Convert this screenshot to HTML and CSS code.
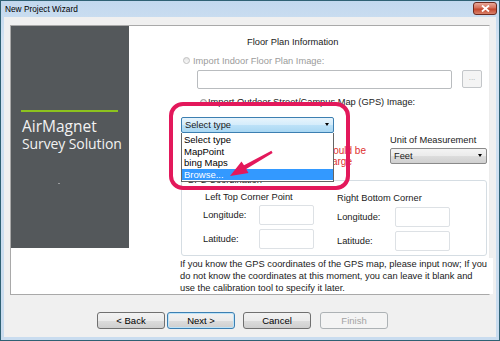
FILE: index.html
```html
<!DOCTYPE html>
<html lang="en">
<head>
    <meta charset="UTF-8">
    <title>New Project Wizard</title>
    <link rel="stylesheet" href="styles.css">
</head>
<body>

    <div class="window">
        <div class="titlebar">
            <span class="title">New Project Wizard</span>
            <span class="close">
                <svg width="9" height="7" viewBox="0 0 9 7"><path d="M1 0.5 L8 6.5 M8 0.5 L1 6.5" stroke="#fff" stroke-width="1.8"/></svg>
            </span>
        </div>

        <div class="client">
            <div class="panel">
                <div class="sidebar">
                    <div class="brand-line"></div>
                    <div class="brand">
                        <div class="brand-top">AirMagnet</div>
                        <div class="brand-bottom">Survey Solution</div>
                    </div>
                    <div class="brand-dot"></div>
                </div>

                <div class="content">
                    <div class="heading">Floor Plan Information</div>

                    <label class="radio indoor disabled"><span class="dot"></span>Import Indoor Floor Plan Image:</label>
                    <div class="file-row">
                        <div class="textbox"></div>
                        <div class="browse">...</div>
                    </div>

                    <label class="radio outdoor"><span class="dot"></span>Import Outdoor Street/Campus Map (GPS) Image:</label>
                    <div class="combo open">Select type<span class="caret"></span></div>

                    <div class="middle-row">
                        <div class="warning">
                            <div>The map type should be</div>
                            <div class="second">set for a large</div>
                        </div>
                        <div class="unit">
                            <div class="unit-label">Unit of Measurement</div>
                            <div class="combo plain">Feet<span class="caret"></span></div>
                        </div>
                    </div>

                    <fieldset class="gps">
                        <legend>GPS Coordination</legend>
                        <div class="corners">
                            <div class="corner left">
                                <div class="corner-title">Left Top Corner Point</div>
                                <div class="coord-row first"><span>Longitude:</span><div class="coord-box"></div></div>
                                <div class="coord-row"><span>Latitude:</span><div class="coord-box"></div></div>
                            </div>
                            <div class="corner right">
                                <div class="corner-title">Right Bottom Corner</div>
                                <div class="coord-row first"><span>Longitude:</span><div class="coord-box"></div></div>
                                <div class="coord-row"><span>Latitude:</span><div class="coord-box"></div></div>
                            </div>
                        </div>
                    </fieldset>

                    <p class="note">If you know the GPS coordinates of the GPS map, please input now; If you<br>do not know the coordinates at this moment, you can leave it blank and<br>use the calibration tool to specify it later.</p>
                </div>
            </div>

            <!-- Wizard buttons -->
            <div class="actions">
                <button class="btn">&lt; Back</button>
                <button class="btn btn-default">Next &gt;</button>
                <button class="btn btn-cancel">Cancel</button>
                <button class="btn btn-finish" disabled>Finish</button>
            </div>
        </div>

        <!-- open combo list and the pink callout drawn over the dialog -->
        <ul class="dropdown-list">
            <li>Select type</li>
            <li>MapPoint</li>
            <li>bing Maps</li>
            <li class="selected">Browse...</li>
        </ul>
        <div class="callout"></div>
        <svg class="arrow" width="56" height="32" viewBox="0 0 56 32">
            <polygon points="7,27 18.5,12.5 21,16.3 48.4,1.8 49.6,3.9 23.2,20 25.5,24" fill="#e3185b"/>
        </svg>
    </div>

</body>
</html>
```

FILE: styles.css
```css
body {
    margin: 0;
    font-family: "Liberation Sans", Arial, sans-serif;
    font-size: 9.3px;
    color: #1a1a1a;
    background: #fff;
}

.window {
    position: relative;
    width: 500px;
    height: 341px;
    box-sizing: border-box;
    border: 1px solid #2f6174;
    padding: 0 3px 3px;
    background: linear-gradient(to bottom, #c2d8ee, #d3e3f3 40px, #c9dcef);
}

.titlebar {
    height: 16px;
    margin: 0 -3px;
    display: flex;
    align-items: flex-start;
    justify-content: space-between;
}

.title {
    padding-left: 4px;
    line-height: 17px;
    font-size: 8.3px;
    color: #000;
}

.close {
    width: 24px;
    height: 13px;
    margin: 1px 2px 0 0;
    box-sizing: border-box;
    border: 1px solid #6e2a1f;
    border-radius: 3px;
    background: linear-gradient(to bottom, #e9a899, #d4705a 45%, #c4462c 55%, #d9826b);
    display: flex;
    align-items: center;
    justify-content: center;
}

.client {
    height: 320px;
    background: #f0f0f0;
    display: flex;
    flex-direction: column;
}

.panel {
    margin: 8px 0 0 6px;
    width: 480px;
    height: 270px;
    box-sizing: border-box;
    border: 1px solid #a9a9a9;
    border-right-color: #ececec;
    background: #fff;
    display: flex;
}

/* left brand column */
.sidebar {
    width: 118px;
    height: 222px;
    flex-shrink: 0;
    background: #54585b;
    display: flex;
    flex-direction: column;
}

.brand-line {
    margin: 84px 0 0 10px;
    width: 97px;
    height: 2px;
    background: #8cc21e;
}

.brand {
    margin: 6px 0 0 11px;
    font-family: "Open Sans", sans-serif;
    line-height: 17px;
    color: #f2f2f2;
    white-space: nowrap;
}

.brand-top {
    font-size: 15.5px;
}

.brand-bottom {
    font-size: 14px;
    letter-spacing: -0.1px;
}

.brand-dot {
    margin: 31px 0 0 47px;
    width: 2px;
    height: 1px;
    background: #9a9c9e;
}

/* right form column */
.content {
    flex: 1;
    padding-left: 51px;
    display: flex;
    flex-direction: column;
    align-items: flex-start;
}

.heading {
    margin: 10px 0 0 67px;
    line-height: 12px;
    white-space: nowrap;
}

.radio {
    height: 12px;
    display: flex;
    align-items: center;
    white-space: nowrap;
}

.radio .dot {
    width: 7px;
    height: 7px;
    box-sizing: border-box;
    border-radius: 50%;
    border: 1px solid #8e8f8f;
    background: linear-gradient(to bottom, #e4e4e4, #fafafa);
}

.indoor {
    margin-top: 7px;
    padding-left: 3px;
}

.indoor .dot {
    margin-right: 3px;
}

.disabled {
    color: #9b9b9b;
}

.disabled .dot {
    border-color: #c0c0c0;
}

.outdoor {
    margin-top: 7px;
    padding-left: 20px;
}

.outdoor .dot {
    margin-right: 1px;
}

.file-row {
    margin: 4px 0 0 17px;
    display: flex;
}

.textbox {
    width: 255px;
    height: 19px;
    box-sizing: border-box;
    border: 1px solid #b9bcbf;
    border-radius: 2px;
    background: #fff;
}

.browse {
    margin-left: 10px;
    width: 20px;
    height: 18px;
    box-sizing: border-box;
    border: 1px solid #c3c6c9;
    border-radius: 2px;
    background: #f4f4f4;
    color: #a8a8a8;
    font-size: 8px;
    line-height: 14px;
    text-align: center;
}

.combo {
    height: 16px;
    box-sizing: border-box;
    border-radius: 2px;
    padding-left: 3px;
    line-height: 14px;
    display: flex;
    align-items: center;
    white-space: nowrap;
}

.combo .caret {
    margin-left: auto;
    margin-right: 4px;
    width: 0;
    height: 0;
    border-left: 2.5px solid transparent;
    border-right: 2.5px solid transparent;
    border-top: 3px solid #000;
}

.combo.open {
    margin: 9px 0 0 1px;
    width: 153px;
    border: 1px solid #3c7fb1;
    background: linear-gradient(to bottom, #e7f4fc, #d4ecfb 50%, #bde2f8 50%, #a9d7f3);
}

.combo.plain {
    margin-top: 2px;
    width: 97px;
    border: 1px solid #8a8a8a;
    background: linear-gradient(to bottom, #f4f4f4, #ebebeb 50%, #dddddd 50%, #d0d0d0);
}

.middle-row {
    height: 43px;
    display: flex;
}

.warning {
    width: 186px;
    padding-top: 12.5px;
    color: #e0302f;
    line-height: 11px;
    text-align: right;
    white-space: nowrap;
    font-size: 10px;
}

.warning .second {
    margin-right: 14px;
}

.unit {
    margin-left: 24px;
}

.unit-label {
    padding-top: 1px;
    line-height: 12px;
    white-space: nowrap;
}

.gps {
    margin: 0 0 0 1px;
    padding: 0;
    width: 306px;
    box-sizing: border-box;
    border: 1px solid #d5dde3;
    border-radius: 3px;
    min-width: 0;
}

.gps legend {
    margin-left: 4px;
    padding: 0 1px;
    line-height: 12px;
}

.corners {
    padding: 5px 0 4px 21px;
    display: flex;
}

.corner.left {
    width: 134px;
}

.corner.right {
    padding-top: 1px;
}

.corner-title {
    line-height: 12px;
    padding-left: 2px;
    white-space: nowrap;
}

.corner.right .corner-title {
    padding-left: 0;
}

.coord-row {
    margin-top: 4px;
    display: flex;
    align-items: center;
}

.coord-row.first {
    margin-top: 2px;
}

.corner.right .coord-row.first {
    margin-top: 3px;
}

.coord-row span {
    width: 56px;
}

.corner.right .coord-row span {
    width: 58px;
}

.coord-box {
    width: 55px;
    height: 20px;
    box-sizing: border-box;
    border: 1px solid #dde1e5;
    border-radius: 2px;
    background: #fff;
}

.note {
    margin: 2px 0 0;
    padding-right: 6px;
    line-height: 12px;
    white-space: nowrap;
    background: #fff;
}

.actions {
    margin: 17px 0 0 93px;
    display: flex;
}

.btn {
    width: 68px;
    height: 17px;
    padding: 0;
    box-sizing: border-box;
    border: 1px solid #707070;
    border-radius: 3px;
    background: linear-gradient(to bottom, #f2f2f2, #ebebeb 50%, #dddddd 50%, #cfcfcf);
    font-family: "Liberation Sans", Arial, sans-serif;
    font-size: 9.5px;
    color: #000;
    margin-right: 2px;
}

.btn-default {
    border-color: #3c7fb1;
    box-shadow: inset 0 0 0 1px #bde3f8;
    margin-right: 8px;
}

.btn-cancel {
    margin-right: 9px;
}

.btn-finish {
    border-color: #adb2b5;
    background: #f4f4f4;
    color: #a3a3a3;
}

/* overlays */
.dropdown-list {
    position: absolute;
    left: 180px;
    top: 132px;
    width: 153px;
    height: 49px;
    box-sizing: border-box;
    margin: 0;
    padding: 1px 0 0;
    list-style: none;
    background: #fff;
    border: 1px solid #646464;
    border-top: none;
    font-size: 9.5px;
    color: #000;
}

.dropdown-list li {
    height: 11.5px;
    line-height: 11.5px;
    padding-left: 2px;
}

.dropdown-list .selected {
    background: #3399ff;
    color: #fff;
}

.callout {
    position: absolute;
    left: 168px;
    top: 101px;
    width: 181px;
    height: 88px;
    box-sizing: border-box;
    border: 4.5px solid #e3185b;
    border-radius: 14px;
}

.arrow {
    position: absolute;
    left: 222px;
    top: 148px;
}
```
